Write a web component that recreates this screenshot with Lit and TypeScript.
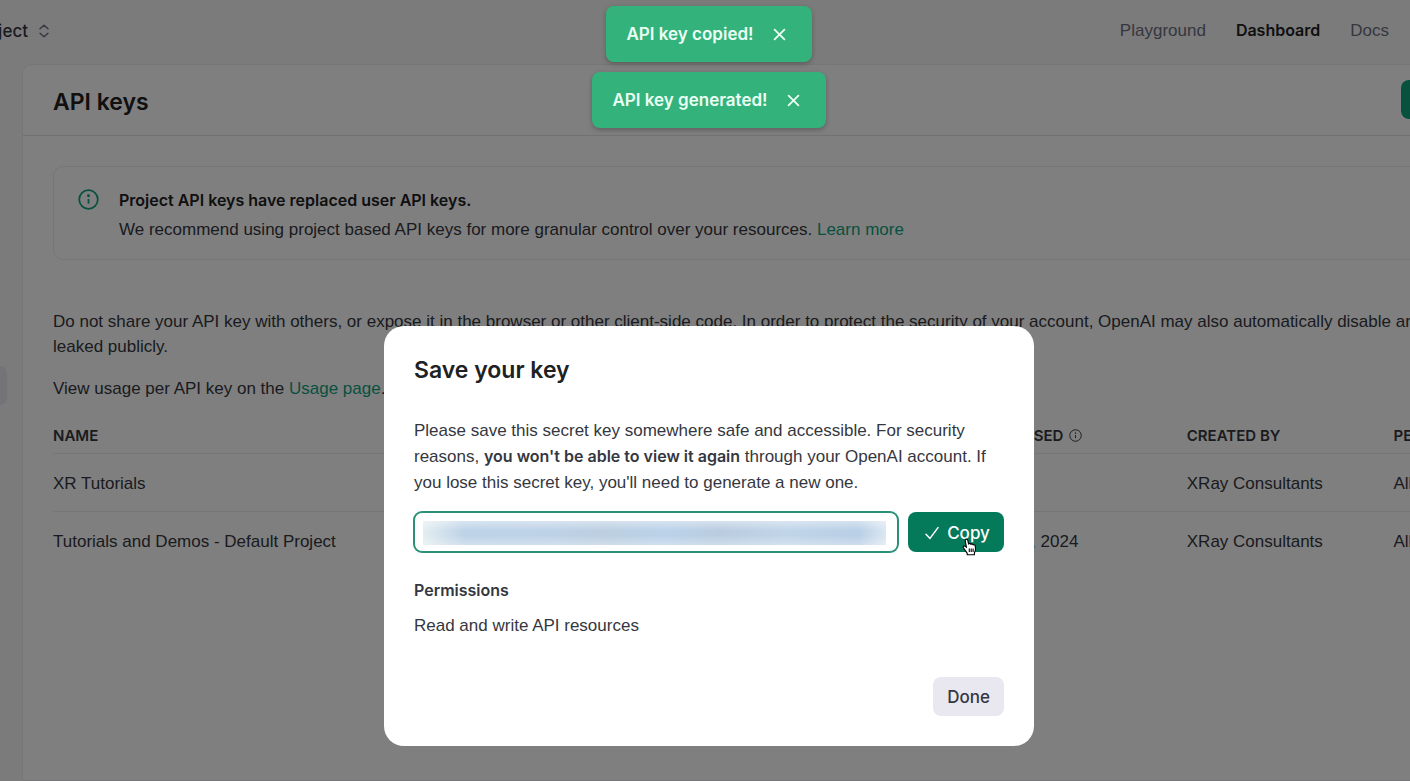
import { LitElement, html, css, svg } from "lit";
import { customElement, state } from "lit/decorators.js";

interface KeyRow {
  name: string;
  secret: string;
  created: string;
  lastUsed: string;
  owner: string;
  permissions: string;
}

const ROWS: KeyRow[] = [
  { name: "XR Tutorials", secret: "", created: "", lastUsed: "Never", owner: "XRay Consultants", permissions: "All" },
  { name: "Tutorials and Demos - Default Project", secret: "", created: "", lastUsed: "Jun 18, 2024", owner: "XRay Consultants", permissions: "All" },
];

const infoShape = svg`
  <circle cx="12" cy="12" r="10.6"></circle>
  <path d="M12 11.4v5.4"></path>
  <circle cx="12" cy="7.6" r="0.7" fill="currentColor"></circle>`;

@customElement("app-root")
export class AppRoot extends LitElement {
  static styles = css`
    :host {
      display: block;
      position: relative;
      height: 100vh;
      overflow: hidden;
      background: #f7f7f8;
      color: #353740;
      font: 400 17px/25px "Liberation Sans", Arial, sans-serif;
    }
    * { box-sizing: border-box; }
    h1, h2, h3, p { margin: 0; }
    button { border: 0; font: inherit; cursor: pointer; }
    a { color: #10a37f; text-decoration: none; }
    svg { display: block; fill: none; stroke: currentColor; flex: none; }
    .page { display: flex; flex-direction: column; height: 100%; }

    .top {
      display: flex;
      justify-content: space-between;
      align-items: center;
      height: 64px;
      flex: none;
      padding: 0 21px 3px 0;
    }
    .project {
      display: flex;
      justify-content: flex-end;
      align-items: center;
      gap: 10px;
      width: 50px;
      padding: 0;
      background: none;
      color: #353740;
      font: 500 17px/24px Inter, sans-serif;
      white-space: nowrap;
    }
    .project svg { color: #6e6e80; }
    .links { display: flex; gap: 30px; }
    .links a { color: #6e6e80; }
    .links .current { color: #202123; font: 600 16px/25px Inter, sans-serif; }

    .body { display: flex; flex: 1; width: calc(100% + 240px); }
    .side { width: 22px; flex: none; padding-top: 302px; }
    .side a { display: block; width: 7px; height: 39px; border-radius: 0 8px 8px 0; background: #e6e6f0; }
    .panel {
      flex: 1;
      min-width: 0;
      background: #fff;
      border: 1px solid #ececf1;
      border-radius: 10px 0 0 0;
    }
    .panel-head {
      display: flex;
      justify-content: space-between;
      align-items: center;
      height: 71px;
      padding: 0 30px 2px;
      border-bottom: 1px solid #e3e3e8;
    }
    .panel-head h1 { padding-top: 5px; color: #202123; font: 600 23px/32px Inter, sans-serif; }
    .create { width: 218px; height: 39px; border-radius: 8px; background: #10a37f; color: #fff; }
    .content { padding: 30px; }
    .alert {
      display: flex;
      gap: 20px;
      padding: 18px 24px 14px;
      border: 1px solid #ececf1;
      border-radius: 10px;
      line-height: 30px;
    }
    .alert svg { margin-top: 4px; color: #10a37f; }
    .alert h3 { color: #202123; font: 600 16px/30px Inter, sans-serif; }
    .intro { margin-top: 49px; }
    .usage { margin-top: 17px; }

    table { width: 100%; margin-top: 16px; border-collapse: collapse; table-layout: fixed; }
    th, td { padding: 2px 0 0; text-align: left; white-space: nowrap; }
    th { height: 36px; font: 600 15px/20px Inter, sans-serif; border-bottom: 1px solid #ececf1; }
    td { height: 58px; }
    tbody tr:not(:last-child) td { border-bottom: 1px solid #ececf1; }
    .th-info { display: flex; align-items: center; gap: 6px; }
    .c-name { width: 33.2%; }
    .c-mid { width: 13%; }
    .c-last { width: 13.2%; }

    .overlay {
      position: absolute;
      inset: 0;
      padding: 326px 0 0 8px;
      background: rgba(0, 0, 0, 0.5);
    }
    .modal {
      position: relative;
      width: 650px;
      max-width: 100%;
      margin: 0 auto;
      padding: 30px;
      border: 0;
      border-radius: 20px;
      background: #fff;
      color: #353740;
      line-height: 26px;
    }
    .modal h2 { color: #202123; font: 600 23px/28px Inter, sans-serif; }
    .modal b { font: 600 16px/25px Inter, sans-serif; }
    .lead { margin-top: 34px; }
    .key-row { display: flex; gap: 10px; margin-top: 16px; }
    .key {
      flex: 1;
      min-width: 0;
      height: 40px;
      padding: 8px 11px 6px 8px;
      border: 1px solid #2a9078;
      border-radius: 8px;
      outline: 0;
      box-shadow: 0 0 0 1px #2a9078;
      font: inherit;
      background:
        linear-gradient(to bottom, rgba(255, 255, 255, 0.4), rgba(255, 255, 255, 0) 40%, rgba(255, 255, 255, 0) 60%, rgba(255, 255, 255, 0.3)) content-box,
        linear-gradient(to right, #e3eef0, #bed3e8 9%, #bed2e7 28%, #bccfe0 40%, #bbd2ea 52%, #bacde0 64%, #c1d5e8 78%, #b9cfe6 94%, #dbe7f1) content-box,
        #fff;
    }
    .copy {
      position: relative;
      display: flex;
      align-items: center;
      justify-content: center;
      gap: 7px;
      width: 96px;
      height: 40px;
      padding: 1px 0 0 2px;
      border-radius: 8px;
      background: #047a5b;
      color: #fff;
      font: 500 17px/24px Inter, sans-serif;
    }
    .pointer { position: absolute; left: 54px; top: 26px; stroke: #000; }
    .modal h3 { margin-top: 25px; font: 600 16px/26px Inter, sans-serif; }
    .scope { margin-top: 10px; }
    .actions { display: flex; justify-content: flex-end; margin-top: 38px; }
    .done {
      height: 39px;
      padding: 0 14px;
      border-radius: 8px;
      background: #e9e8f0;
      color: #353740;
      font: 500 17px/24px Inter, sans-serif;
    }

    .toasts {
      position: absolute;
      inset: 6px 0 auto 0;
      display: flex;
      flex-direction: column;
      align-items: center;
      gap: 10px;
      padding-left: 8px;
    }
    .toast {
      display: flex;
      align-items: center;
      gap: 19px;
      height: 56px;
      padding: 0 26px 0 20px;
      border-radius: 8px;
      background: #34b27b;
      color: #eafff3;
      font: 600 17px/24px Inter, sans-serif;
      box-shadow: 0 2px 5px rgba(0, 0, 0, 0.25);
    }
    .toast button { padding: 0; background: none; color: inherit; }
  `;

  @state() private toasts = ["API key copied!", "API key generated!"];

  private dismiss(text: string) {
    this.toasts = this.toasts.filter((t) => t !== text);
  }

  render() {
    return html`
      <div class="page">
        <header class="top">
          <button class="project">
            <span>Default project</span>
            <svg width="12" height="14" viewBox="0 0 12 14" stroke-width="1.5" stroke-linecap="round" stroke-linejoin="round">
              <path d="M2 4.800 6 1.200l4 3.600M2 9.200l4 3.600 4-3.600"></path>
            </svg>
          </button>
          <nav class="links">
            <a href="#playground">Playground</a>
            <a class="current" href="#dashboard">Dashboard</a>
            <a href="#docs">Docs</a>
          </nav>
        </header>
        <div class="body">
          <nav class="side"><a href="#keys" aria-label="API keys"></a></nav>
          <main class="panel">
            <div class="panel-head">
              <h1>API keys</h1>
              <button class="create">+ Create new secret key</button>
            </div>
            <div class="content">
              <section class="alert">
                <svg width="21" height="21" viewBox="0 0 24 24" stroke-width="2">${infoShape}</svg>
                <div>
                  <h3>Project API keys have replaced user API keys.</h3>
                  <p>We recommend using project based API keys for more granular control over your resources. <a href="#learn">Learn more</a></p>
                </div>
              </section>
              <p class="intro">
                Do not share your API key with others, or expose it in the browser or other client-side code. In order to
                protect the security of your account, OpenAI may also automatically disable any API key that has
                leaked&nbsp;publicly.
              </p>
              <p class="usage">View usage per API key on the <a href="#usage">Usage page</a>.</p>
              <table>
                <thead>
                  <tr>
                    <th class="c-name">NAME</th>
                    <th class="c-mid">SECRET KEY</th>
                    <th class="c-mid">CREATED</th>
                    <th class="c-last">
                      <span class="th-info">LAST USED
                        <svg width="13" height="13" viewBox="0 0 24 24" stroke-width="1.8">${infoShape}</svg>
                      </span>
                    </th>
                    <th class="c-last">CREATED BY</th>
                    <th>PERMISSIONS</th>
                  </tr>
                </thead>
                <tbody>
                  ${ROWS.map((r) => html`
                    <tr>
                      <td>${r.name}</td>
                      <td>${r.secret}</td>
                      <td>${r.created}</td>
                      <td>${r.lastUsed}</td>
                      <td>${r.owner}</td>
                      <td>${r.permissions}</td>
                    </tr>`)}
                </tbody>
              </table>
            </div>
          </main>
        </div>
      </div>

      <div class="overlay">
        <section class="modal" role="dialog" aria-modal="true" aria-labelledby="save-title">
          <h2 id="save-title">Save your key</h2>
          <p class="lead">
            Please save this secret key somewhere safe and accessible. For security reasons,
            <b>you won't be able to view it again</b> through your OpenAI account. If you lose this secret key, you'll
            need to generate a new one.
          </p>
          <div class="key-row">
            <input class="key" type="text" readonly aria-label="Secret key" />
            <button class="copy">
              <svg width="16" height="16" viewBox="0 0 16 16" stroke-width="1.5" stroke-linecap="round" stroke-linejoin="round">
                <path d="M2 9.200 6 13.400 14 2.600"></path>
              </svg>
              Copy
              <svg class="pointer" width="16" height="18" viewBox="0 0 16 18" stroke-width="1.1" stroke-linejoin="round" aria-hidden="true">
                <path fill="#fff" d="M5.200 16.800v-1.600C4.500 13.800 2.900 12.200 1.400 9.800 1 9 1.300 8.300 2 8.100c.9-.2 1.700.3 2.500 1.400L3.300 3.200C3 2 3.500 1.200 4.300 1.100c.8-.1 1.300.4 1.500 1.300l.8 3.700c.2-.7 1.900-.9 2.300.3.500-.8 1.900-.6 2.200.5.600-.6 1.900-.3 2.100.8.300 1.500.5 3.600 0 5.200-.3 1-.7 1.500-.8 2.300v1.600z"></path>
                <path d="M7.300 10.600v3.400M9.200 10.600v3.400M11.100 10.600v3.400"></path>
              </svg>
            </button>
          </div>
          <h3>Permissions</h3>
          <p class="scope">Read and write API resources</p>
          <div class="actions"><button class="done">Done</button></div>
        </section>
      </div>

      <div class="toasts" role="status">
        ${this.toasts.map((t) => html`
          <div class="toast">
            <span>${t}</span>
            <button aria-label="Dismiss" @click=${() => this.dismiss(t)}>
              <svg width="13" height="13" viewBox="0 0 13 13" stroke-width="1.8" stroke-linecap="round">
                <path d="M1.600 1.600l9.800 9.800M11.400 1.600l-9.800 9.800"></path>
              </svg>
            </button>
          </div>`)}
      </div>
    `;
  }
}
